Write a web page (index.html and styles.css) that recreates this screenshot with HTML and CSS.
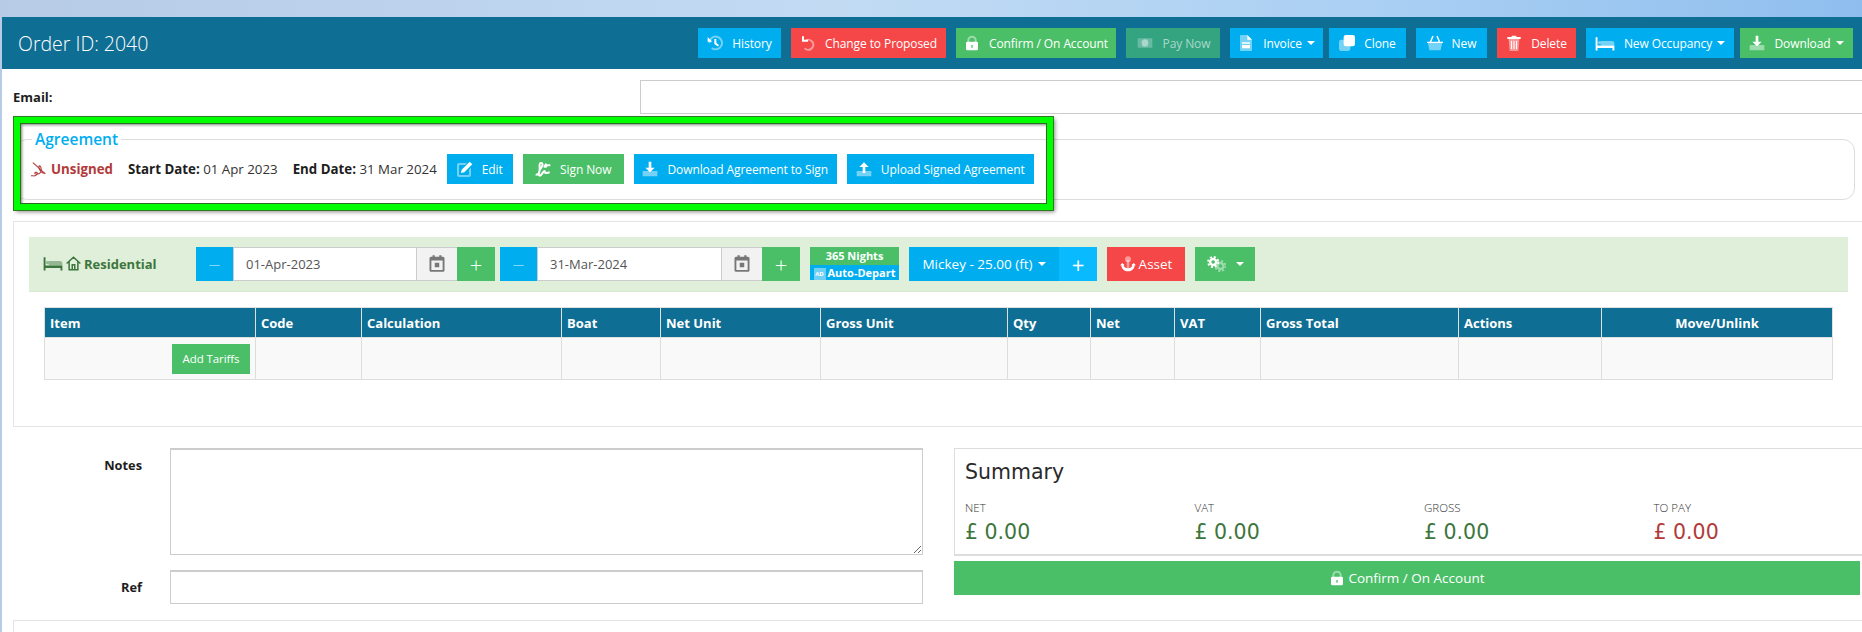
FILE: index.html
```html
<!DOCTYPE html>
<html lang="en">
<head>
<meta charset="utf-8">
<title>Order ID: 2040</title>
<link rel="stylesheet" href="styles.css">
</head>
<body>
<svg class="defs" width="0" height="0" aria-hidden="true">
  <symbol id="i-history" viewBox="0 0 24 24"><path class="t" d="M5 12a8 8 0 1 1 3 6.2l-1.8 2.3A11 11 0 1 0 2 12z"/><path d="M1 3l7 7H1zM11 6h3v6l4 3-1.6 2.2L11 13.5z"/></symbol>
  <symbol id="i-undo" viewBox="0 0 24 24"><path class="t" d="M9 6.500A9 9 0 1 1 6 21l2-2.400A6 6 0 1 0 9 9.600z"/><path d="M3 2h3v5h6v3H3z"/></symbol>
  <symbol id="i-lock" viewBox="0 0 24 24"><path class="t" d="M5 11V8a7 7 0 0 1 14 0v3h-3V8a4 4 0 0 0-8 0v3z"/><path fill-rule="evenodd" d="M5 10h14a2 2 0 0 1 2 2v9a2 2 0 0 1-2 2H5a2 2 0 0 1-2-2v-9a2 2 0 0 1 2-2zm6 5v4h2v-4z"/></symbol>
  <symbol id="i-money" viewBox="0 0 24 24"><path class="t" d="M2 5h20a1 1 0 0 1 1 1v12a1 1 0 0 1-1 1H2a1 1 0 0 1-1-1V6a1 1 0 0 1 1-1z"/><ellipse cx="12" cy="12" rx="5" ry="5.500"/></symbol>
  <symbol id="i-invoice" viewBox="0 0 18 24"><path class="t" d="M1 0h10l7 7v16a1 1 0 0 1-1 1H1a1 1 0 0 1-1-1V1a1 1 0 0 1 1-1z"/><path d="M11 0l7 7h-7zM3 11h12v2H3zM3 15h12v5H3z"/></symbol>
  <symbol id="i-clone" viewBox="0 0 24 24"><rect class="t" x="0" y="7" width="17" height="17" rx="3.500"/><rect x="7" y="0" width="17" height="17" rx="3.500"/></symbol>
  <symbol id="i-basket" viewBox="0 0 24 22"><path class="t" d="M1 10h22l-2.500 11a1 1 0 0 1-1 1h-15a1 1 0 0 1-1-1z"/><path d="M8 0l2 1-3.500 8H4.200zM16 0l-2 1 3.500 8h2.300zM0 9h24v2H0z"/></symbol>
  <symbol id="i-trash" viewBox="0 0 20 24"><path class="t" d="M2 6h16l-1.300 16.500A1.500 1.500 0 0 1 15.200 24H4.800a1.500 1.500 0 0 1-1.500-1.500z"/><path d="M0 3h6l1-2h6l1 2h6v3H0zM5.500 9H7v12H5.500zM9.200 9h1.600v12H9.200zM13 9h1.500v12H13z"/></symbol>
  <symbol id="i-bed" viewBox="0 0 32 24"><path class="t" d="M9 8h18a4 4 0 0 1 4 4v3H9z"/><path d="M1 2h3v13h27v8h-3v-4H4v4H1z"/><circle class="t" cx="7" cy="10.500" r="2.500"/></symbol>
  <symbol id="i-download" viewBox="0 0 24 24"><path class="t" d="M1 15h22v7a1 1 0 0 1-1 1H2a1 1 0 0 1-1-1z"/><path d="M10 1h4v9h5l-7 7-7-7h5z"/></symbol>
  <symbol id="i-upload" viewBox="0 0 24 24"><path class="t" d="M1 15h22v7a1 1 0 0 1-1 1H2a1 1 0 0 1-1-1z"/><path d="M10 18h4v-9h5l-7-7-7 7h5z"/></symbol>
  <symbol id="i-edit" viewBox="0 0 24 24"><path class="t" fill-rule="evenodd" d="M4 3h11l-3 3H4a1 1 0 0 0-1 1v13a1 1 0 0 0 1 1h13a1 1 0 0 0 1-1v-7l3-3v11a3 3 0 0 1-3 3H3a3 3 0 0 1-3-3V6a3 3 0 0 1 3-3z"/><path d="M19 1l4 4L11 17l-5 1 1-5z"/></symbol>
  <symbol id="i-sign" viewBox="0 0 24 24"><path fill="none" stroke="currentColor" stroke-width="3" d="M1 20c4 2 6-3 6-8s-1-9 2-9 3 3 1 6-5 9-4 12 4-1 6-4 3-2 3 0 2 1 7 0"/><path d="M13 7l3-4 2 2h5v3h-4l-2 2h-4z"/></symbol>
  <symbol id="i-unsign" viewBox="0 0 24 24"><g fill="none" stroke="currentColor" stroke-width="1.700"><path d="M3 1l20 18"/><path d="M4 22c4 1 6-2 6-4s-4-2-4 0 5 2 8 0 3-9 1-11-3 0-2 3 4 8 9 8"/><path d="M0 22h4"/></g></symbol>
  <symbol id="i-cal" viewBox="0 0 24 24"><path fill-rule="evenodd" d="M6 1h3v2h6V1h3v2h2a2 2 0 0 1 2 2v16a2 2 0 0 1-2 2H4a2 2 0 0 1-2-2V5a2 2 0 0 1 2-2h2zM4.500 8v12.500h15V8zM9 11h6v6H9z"/></symbol>
  <symbol id="i-house" viewBox="0 0 24 24"><path fill="none" stroke="currentColor" stroke-width="2.400" d="M1 12L12 2l11 10M5 9v13h14V9M10 22v-8h4v8"/></symbol>
  <symbol id="i-anchor" viewBox="0 0 24 24"><path class="t" d="M10 6h4v14h-4z"/><circle class="t" cx="12" cy="5" r="4.500"/><path d="M0 14l3.500-3.500L7 14H5.500c.5 3 3 4.500 6.500 4.500s6-1.500 6.500-4.500H17l3.500-3.500L24 14h-2c-.5 6-5 9-10 9S2.500 20 2 14z"/></symbol>
  <symbol id="i-gears" viewBox="0 0 28 24">
    <g fill="none" stroke="currentColor"><circle cx="9" cy="9" r="4.500" stroke-width="3.500"/><circle cx="9" cy="9" r="7.500" stroke-width="3" stroke-dasharray="3 2.900"/></g>
    <g class="t" fill="none" stroke="currentColor"><circle cx="20" cy="15" r="4.500" stroke-width="3.500"/><circle cx="20" cy="15" r="7.500" stroke-width="3" stroke-dasharray="3 2.900"/></g>
  </symbol>
</svg>

<main class="page">
  <header class="topbar">
    <h1 class="title">Order ID: 2040</h1>
    <nav class="actions">
      <a class="btn blue w-history"><svg class="ico"><use href="#i-history"/></svg>History</a>
      <a class="btn red w-change"><svg class="ico"><use href="#i-undo"/></svg>Change to Proposed</a>
      <a class="btn green w-confirm"><svg class="ico"><use href="#i-lock"/></svg>Confirm / On Account</a>
      <a class="btn teal w-pay"><svg class="ico wide"><use href="#i-money"/></svg>Pay Now</a>
      <a class="btn blue w-invoice tight"><svg class="ico"><use href="#i-invoice"/></svg>Invoice<span class="caret"></span></a>
      <a class="btn blue w-clone"><svg class="ico"><use href="#i-clone"/></svg>Clone</a>
      <a class="btn blue w-new"><svg class="ico"><use href="#i-basket"/></svg>New</a>
      <a class="btn red w-delete"><svg class="ico"><use href="#i-trash"/></svg>Delete</a>
      <a class="btn blue w-occ tight"><svg class="ico bed"><use href="#i-bed"/></svg>New Occupancy<span class="caret"></span></a>
      <a class="btn green w-dl"><svg class="ico"><use href="#i-download"/></svg>Download<span class="caret"></span></a>
    </nav>
  </header>

  <div class="email-row">
    <label class="email-label">Email:</label>
    <input class="email-input" type="text">
  </div>

  <fieldset class="agreement">
    <legend class="agreement-title">Agreement</legend>
    <div class="agreement-row">
      <span class="unsigned"><svg class="ico small"><use href="#i-unsign"/></svg>Unsigned</span>
      <span class="date"><b>Start Date:</b> 01 Apr 2023</span>
      <span class="date"><b>End Date:</b> 31 Mar 2024</span>
      <a class="btn blue w-edit"><svg class="ico"><use href="#i-edit"/></svg>Edit</a>
      <a class="btn green w-sign"><svg class="ico"><use href="#i-sign"/></svg>Sign Now</a>
      <a class="btn blue w-dla"><svg class="ico"><use href="#i-download"/></svg>Download Agreement to Sign</a>
      <a class="btn blue w-upa"><svg class="ico"><use href="#i-upload"/></svg>Upload Signed Agreement</a>
    </div>
  </fieldset>
  <div class="highlight"></div>

  <section class="panel">
    <div class="occ-bar">
      <div class="occ-name"><svg class="ico bed"><use href="#i-bed"/></svg><svg class="ico house"><use href="#i-house"/></svg>Residential</div>
      <div class="date-group">
        <a class="step blue minus">−</a>
        <input class="date-input" type="text" value="01-Apr-2023">
        <span class="addon"><svg class="cal"><use href="#i-cal"/></svg></span>
        <a class="step green plus">+</a>
      </div>
      <div class="date-group second">
        <a class="step blue minus">−</a>
        <input class="date-input" type="text" value="31-Mar-2024">
        <span class="addon"><svg class="cal"><use href="#i-cal"/></svg></span>
        <a class="step green plus">+</a>
      </div>
      <div class="nights">
        <span class="nights-top">365 Nights</span>
        <span class="nights-bottom"><span class="ad">AD</span>Auto-Depart</span>
      </div>
      <div class="boat-group">
        <a class="boat">Mickey - 25.00 (ft)<span class="caret"></span></a>
        <a class="boat-plus">+</a>
      </div>
      <a class="btn-lg red asset"><svg class="ico"><use href="#i-anchor"/></svg>Asset</a>
      <a class="btn-lg green gears"><svg class="ico"><use href="#i-gears"/></svg><span class="caret"></span></a>
    </div>

    <table class="items">
      <colgroup>
        <col class="c-item"><col class="c-code"><col class="c-calc"><col class="c-boat"><col class="c-nu"><col class="c-gu"><col class="c-qty"><col class="c-net"><col class="c-vat"><col class="c-gt"><col class="c-act"><col class="c-mv">
      </colgroup>
      <thead>
        <tr><th>Item</th><th>Code</th><th>Calculation</th><th>Boat</th><th>Net Unit</th><th>Gross Unit</th><th>Qty</th><th>Net</th><th>VAT</th><th>Gross Total</th><th>Actions</th><th class="center">Move/Unlink</th></tr>
      </thead>
      <tbody>
        <tr><td class="right"><a class="btn green w-tariff">Add Tariffs</a></td><td></td><td></td><td></td><td></td><td></td><td></td><td></td><td></td><td></td><td></td><td></td></tr>
      </tbody>
    </table>
  </section>

  <section class="lower">
    <div class="form-col">
      <div class="form-row">
        <label class="form-label">Notes</label>
        <textarea class="notes"></textarea>
      </div>
      <div class="form-row">
        <label class="form-label ref">Ref</label>
        <input class="ref-input" type="text">
      </div>
    </div>
    <div class="summary-col">
      <div class="summary">
        <h2 class="summary-title">Summary</h2>
        <div class="totals">
          <div><div class="t-label">NET</div><div class="t-val">£ 0.00</div></div>
          <div><div class="t-label">VAT</div><div class="t-val">£ 0.00</div></div>
          <div><div class="t-label">GROSS</div><div class="t-val">£ 0.00</div></div>
          <div><div class="t-label">TO PAY</div><div class="t-val due">£ 0.00</div></div>
        </div>
      </div>
      <a class="confirm-wide"><svg class="ico lock"><use href="#i-lock"/></svg>Confirm / On Account</a>
    </div>
  </section>

  <section class="panel-bottom"></section>
</main>
</body>
</html>
```
FILE: styles.css
```css
* { box-sizing: border-box; }
html, body { margin: 0; height: 632px; overflow: hidden; }
body {
  font-family: "Open Sans", "Noto Sans", sans-serif;
  font-size: 13px;
  color: #1d1d1d;
  padding: 17px 0 0 2px;
  background: linear-gradient(90deg, #b7cbe7 0%, #c2dbf3 45%, #a9cff3 75%, #8fbeee 100%);
}
.defs { position: absolute; }
.t { opacity: .45; }
.ico { width: 16px; height: 16px; fill: currentColor; margin-right: 9px; flex: none; }
.ico.wide { width: 18px; }
.ico.bed { width: 20px; height: 15px; }
.ico.small { width: 17px; height: 15px; margin-right: 4px; }
.caret { display: inline-block; margin-left: 5px; border: 4px solid transparent; border-top-color: currentColor; border-bottom: 0; }
.page { background: #fff; height: 615px; position: relative; overflow: hidden; }

.topbar { height: 52px; background: #0f6e93; color: #fff; display: flex; align-items: center; justify-content: space-between; padding: 0 7px 0 16px; }
.title { margin: 0; font-size: 19.500px; font-weight: 300; }
.actions { display: flex; margin-right: 2px; }

.btn { height: 30px; display: inline-flex; align-items: center; justify-content: center; color: #fff; font-size: 12px; margin-right: 10px; white-space: nowrap; letter-spacing: -.1px; }
.actions .btn:last-child { margin-right: 0; }
.btn.tight { margin-right: 6px; }
.blue { background: #00aeef; color: #fff; }
.red { background: #f54748; color: #fff; }
.green { background: #4abf68; color: #fff; }
.teal { background: #34a480; color: #a9d8cb; }
.w-history { width: 83px; } .w-change { width: 155px; } .w-confirm { width: 160px; } .w-pay { width: 94px; }
.w-invoice { width: 93px; } .w-clone { width: 77px; } .w-new { width: 71px; } .w-delete { width: 79px; }
.w-occ { width: 148px; } .w-dl { width: 113px; }
.w-edit { width: 66px; } .w-sign { width: 101px; } .w-dla { width: 203px; } .w-upa { width: 187px; margin-right: 0; }
.w-tariff { width: 78px; margin: 0; font-size: 11.500px; }

.email-row { display: flex; align-items: center; height: 34px; margin: 11px 0 0 11px; }
.email-label { width: 627px; font-weight: 700; font-size: 13px; }
.email-input { flex: 1; height: 34px; border: 1px solid #ccc; margin-right: -2px; }

.agreement { margin: 15px 7px 0 13px; padding: 0 0 0 14px; height: 71px; border: 1px solid #ddd; border-radius: 12px; min-width: 0; }
.agreement-title { margin-left: 2px; padding: 0 3px; font-size: 15.500px; font-weight: 600; color: #00aeef; line-height: 20px; }
.agreement-row { display: flex; align-items: center; height: 30px; margin-top: 5px; font-size: 13.300px; }
.unsigned { display: flex; align-items: center; font-weight: 700; color: #b23a3a; margin-right: 15px; }
.date { margin-right: 15px; white-space: nowrap; color: #333; }
.date b { color: #1d1d1d; }
.date + .date { margin-right: 10px; }
.agreement-row .btn { flex: none; }

.highlight { position: absolute; left: 12px; top: 100px; width: 1039px; height: 93px; border: 6px solid #00ff00; box-shadow: 0 0 0 1px #2f7a23, inset 0 0 0 1px #2f6a25, inset 2px 2px 3px rgba(40,60,40,.6), 2px 2px 4px rgba(0,0,0,.45); pointer-events: none; }

.panel { margin: 21px -10px 0 11px; height: 206px; border: 1px solid #e4e4e4; padding: 15px 15px 0 15px; }
.occ-bar { height: 55px; background: #dfefd9; display: flex; align-items: center; margin-right: 8px; padding-bottom: 1px; border-bottom: 1px solid #d6e8cf; }
.occ-name { width: 167px; padding-left: 14px; display: flex; align-items: center; color: #3c763d; font-weight: 700; font-size: 13px; }
.occ-name .ico { margin-right: 3px; }
.occ-name .house { width: 15px; height: 15px; }
.date-group { display: flex; height: 34px; width: 299px; margin-right: 5px; }
.date-group.second { width: 300px; margin-right: 10px; }
.step { width: 37px; flex: none; display: flex; align-items: center; justify-content: center; font-size: 22px; font-weight: 300; }
.step.minus { color: #7fd6f7; }
.step.plus { width: 38px; }
.date-input { flex: 1; min-width: 0; height: 34px; border: 1px solid #ccc; padding: 0 12px; font: 13px "Open Sans", sans-serif; color: #555; }
.addon { width: 40px; flex: none; background: #f2f2f2; border-bottom: 1px solid #ccc; border-top: 1px solid #ccc; display: flex; align-items: center; justify-content: center; }
.cal { width: 18px; height: 19px; fill: #777; }
.nights { width: 89px; height: 33px; margin-right: 10px; display: flex; flex-direction: column; color: #fff; font-size: 11px; font-weight: 700; text-align: center; align-self: center; margin-top: -1px; }
.nights-top { height: 18px; line-height: 17px; background: #4abf68; }
.nights-bottom { height: 15px; line-height: 15px; background: #00aeef; white-space: nowrap; }
.ad { display: inline-block; background: #6fd0f5; font-size: 6px; line-height: 12px; width: 12px; margin-right: 2px; vertical-align: 1px; }
.boat-group { display: flex; height: 34px; margin-right: 10px; color: #fff; }
.boat { width: 150px; background: #00aeef; display: flex; align-items: center; justify-content: center; font-size: 13.500px; }
.boat-plus { width: 38px; background: #0abaff; display: flex; align-items: center; justify-content: center; font-size: 22px; }
.btn-lg { height: 34px; display: flex; align-items: center; justify-content: center; font-size: 13.500px; }
.asset { width: 78px; margin-right: 10px; }
.asset .ico { margin-right: 3px; width: 16px; height: 16px; }
.gears { width: 60px; }
.gears .ico { width: 19px; height: 16px; margin-right: 5px; }

.items { margin: 15px 0 0 15px; width: 1788px; table-layout: fixed; border-collapse: collapse; }
.c-item { width: 211px; } .c-code { width: 106px; } .c-calc { width: 200px; } .c-boat { width: 99px; } .c-nu { width: 160px; } .c-gu { width: 187px; }
.c-qty { width: 83px; } .c-net { width: 84px; } .c-vat { width: 86px; } .c-gt { width: 198px; } .c-act { width: 143px; } .c-mv { width: 231px; }
.items th { height: 30px; background: #0f6e93; color: #fff; font-size: 13px; font-weight: 700; text-align: left; padding: 0 5px; border: 1px solid #e0e0e0; }
.items th.center { text-align: center; }
.items td { height: 42px; background: #f9f9f9; border: 1px solid #ddd; padding: 0 5px; }
.items td.right { text-align: right; }

.lower { display: grid; grid-template-columns: 940px minmax(0, 1fr); margin-top: 21px; height: 172px; }
.form-col { display: flex; flex-direction: column; gap: 15px; }
.form-row { display: flex; }
.form-label { width: 140px; margin-right: 28px; text-align: right; font-weight: 700; font-size: 12.800px; padding-top: 8px; }
.form-label.ref { padding-top: 8px; }
.notes { width: 753px; height: 107px; border: 1px solid #ccc; border-top-width: 2px; display: block; }
.ref-input { width: 753px; height: 34px; border: 1px solid #ccc; border-top-width: 2px; }
.summary-col { margin-left: 12px; min-width: 0; }
.summary { height: 108px; border: 1px solid #ddd; border-bottom-width: 2px; padding: 10px 10px 0; margin-right: -10px; overflow: hidden; }
.summary-title { margin: 0; font-family: "DejaVu Sans", sans-serif; font-size: 20.500px; font-weight: 400; line-height: 27px; color: #2a2a2a; }
.totals { display: grid; grid-template-columns: repeat(4, 229.5px); margin-top: 13px; }
.t-label { font-size: 11.500px; font-weight: 300; line-height: 17px; color: #333; }
.t-val { font-family: "DejaVu Sans", sans-serif; font-size: 20.500px; line-height: 30px; color: #3c763d; margin-top: 1px; }
.t-val.due { color: #b23a3a; }
.confirm-wide { height: 34px; margin: 5px 2px 0 0; background: #4abf68; color: #fff; display: flex; align-items: center; justify-content: center; font-size: 13.500px; }
.ico.lock { margin-right: 3px; }

.panel-bottom { margin: 0 -10px 0 11px; height: 40px; border-top: 1px solid #e4e4e4; border-left: 1px solid #e4e4e4; }
```
